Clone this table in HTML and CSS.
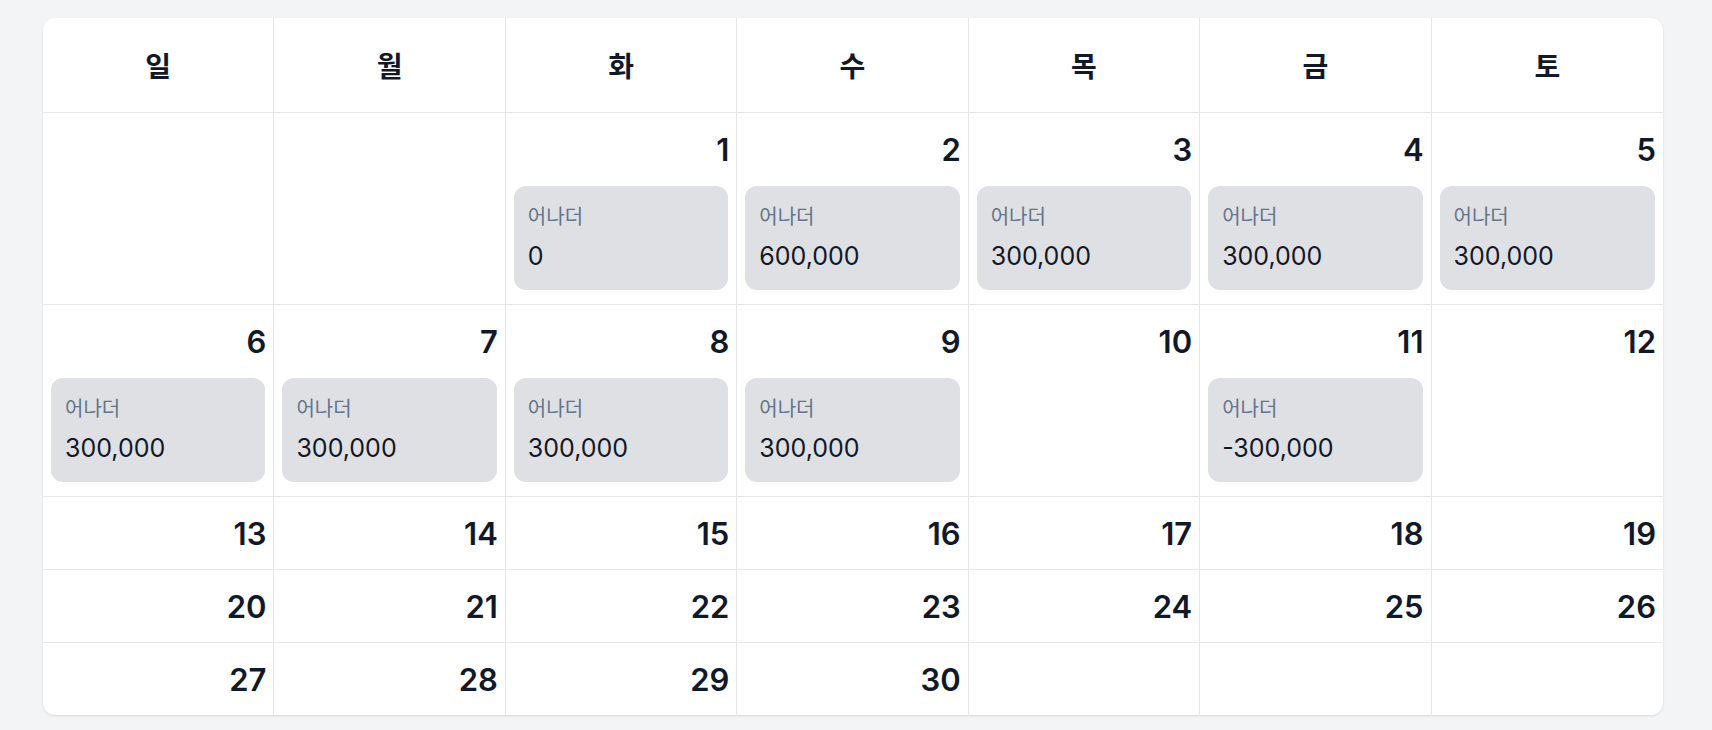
FILE: index.html
```html
<!DOCTYPE html>
<html lang="ko">
<head>
<meta charset="utf-8">
<title>Calendar</title>
<link rel="stylesheet" href="styles.css">
</head>
<body>
<div class="calendar">
  <div class="head">일</div>
  <div class="head">월</div>
  <div class="head">화</div>
  <div class="head">수</div>
  <div class="head">목</div>
  <div class="head">금</div>
  <div class="head last-col">토</div>

  <div class="cell tall"></div>
  <div class="cell tall"></div>
  <div class="cell tall"><div class="num">1</div><div class="entry"><div class="label">어나더</div><div class="amount">0</div></div></div>
  <div class="cell tall"><div class="num">2</div><div class="entry"><div class="label">어나더</div><div class="amount">600,000</div></div></div>
  <div class="cell tall"><div class="num">3</div><div class="entry"><div class="label">어나더</div><div class="amount">300,000</div></div></div>
  <div class="cell tall"><div class="num">4</div><div class="entry"><div class="label">어나더</div><div class="amount">300,000</div></div></div>
  <div class="cell tall last-col"><div class="num">5</div><div class="entry"><div class="label">어나더</div><div class="amount">300,000</div></div></div>

  <div class="cell tall"><div class="num">6</div><div class="entry"><div class="label">어나더</div><div class="amount">300,000</div></div></div>
  <div class="cell tall"><div class="num">7</div><div class="entry"><div class="label">어나더</div><div class="amount">300,000</div></div></div>
  <div class="cell tall"><div class="num">8</div><div class="entry"><div class="label">어나더</div><div class="amount">300,000</div></div></div>
  <div class="cell tall"><div class="num">9</div><div class="entry"><div class="label">어나더</div><div class="amount">300,000</div></div></div>
  <div class="cell tall"><div class="num">10</div></div>
  <div class="cell tall"><div class="num">11</div><div class="entry"><div class="label">어나더</div><div class="amount">-300,000</div></div></div>
  <div class="cell tall last-col"><div class="num">12</div></div>

  <div class="cell"><div class="num">13</div></div>
  <div class="cell"><div class="num">14</div></div>
  <div class="cell"><div class="num">15</div></div>
  <div class="cell"><div class="num">16</div></div>
  <div class="cell"><div class="num">17</div></div>
  <div class="cell"><div class="num">18</div></div>
  <div class="cell last-col"><div class="num">19</div></div>

  <div class="cell"><div class="num">20</div></div>
  <div class="cell"><div class="num">21</div></div>
  <div class="cell"><div class="num">22</div></div>
  <div class="cell"><div class="num">23</div></div>
  <div class="cell"><div class="num">24</div></div>
  <div class="cell"><div class="num">25</div></div>
  <div class="cell last-col"><div class="num">26</div></div>

  <div class="cell last-row"><div class="num">27</div></div>
  <div class="cell last-row"><div class="num">28</div></div>
  <div class="cell last-row"><div class="num">29</div></div>
  <div class="cell last-row"><div class="num">30</div></div>
  <div class="cell last-row"></div>
  <div class="cell last-row"></div>
  <div class="cell last-row last-col"></div>
</div>
</body>
</html>
```

FILE: styles.css
```css
* { box-sizing: border-box; }

html, body {
  margin: 0;
  background: #f3f4f6;
}

body {
  padding: 18px 49px 16px 43px;
  font-family: Inter, "Noto Sans CJK KR", sans-serif;
  color: #111827;
}

.calendar {
  width: 1620px;
  display: grid;
  grid-template-columns: repeat(7, 1fr);
  background: #ffffff;
  border-radius: 12px;
  box-shadow: 0 1px 3px rgba(0, 0, 0, 0.08), 0 1px 2px rgba(0, 0, 0, 0.04);
  overflow: hidden;
}

.head {
  height: 95px;
  display: flex;
  align-items: center;
  justify-content: center;
  font-family: "Noto Sans CJK KR", sans-serif;
  font-weight: 700;
  font-size: 28px;
  border-right: 1px solid #e5e7eb;
  border-bottom: 1px solid #e5e7eb;
}

.cell {
  min-height: 73px;
  padding: 19px 7px 13px 8px;
  display: flex;
  flex-direction: column;
  border-right: 1px solid #e5e7eb;
  border-bottom: 1px solid #e5e7eb;
}

.cell.tall {
  min-height: 192px;
}

.last-col { border-right: none; }
.last-row { border-bottom: none; min-height: 72px; }

.num {
  text-align: right;
  font-weight: 600;
  font-size: 31px;
  line-height: 36px;
}

.entry {
  margin-top: 18px;
  margin-right: 1px;
  height: 104px;
  background: #dfe0e4;
  border-radius: 12px;
  padding: 16px 14px 17px 14px;
}

.label {
  font-family: "Noto Sans CJK KR", sans-serif;
  font-size: 20px;
  line-height: 28px;
  color: #64748b;
}

.amount {
  margin-top: 10px;
  font-size: 25px;
  line-height: 32px;
  font-weight: 400;
  color: #111827;
}
```
